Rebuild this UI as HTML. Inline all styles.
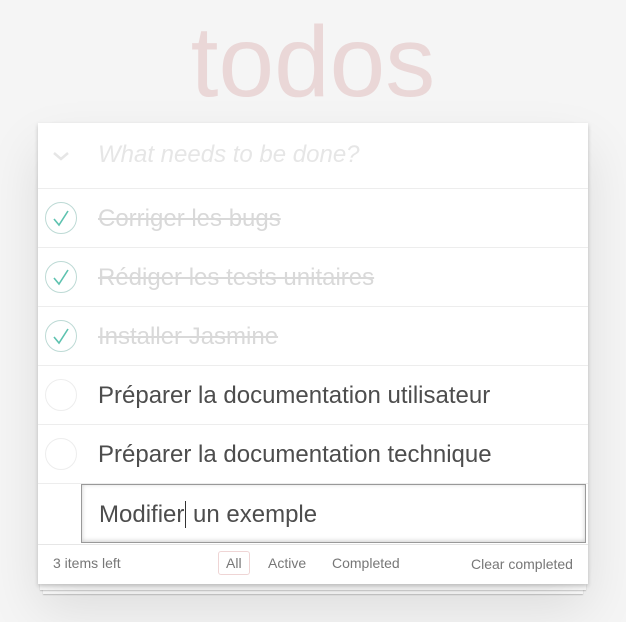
<html><head><style>
body{margin:0;background:#f5f5f5;width:626px;height:622px;overflow:hidden;font-family:"Liberation Sans",sans-serif;position:relative}
h1{position:absolute;top:7px;left:0;width:626px;margin:0;text-align:center;font-size:100px;font-weight:100;color:rgba(175,47,47,0.15);line-height:110px}
.app{position:absolute;left:38px;top:123px;width:550px;height:461px;background:#fff;box-shadow:0 2px 4px rgba(0,0,0,.2),0 25px 50px rgba(0,0,0,.1)}
.st{position:absolute;background:#fff;box-shadow:0 1px 1px rgba(0,0,0,.2)}
.row{position:absolute;left:0;width:550px;height:58px;border-top:1px solid #ededed;font-size:24px;color:#4d4d4d}
.row span{position:absolute;left:60px;top:16px;line-height:28px}
.done span{color:#d9d9d9;text-decoration:line-through}
.c{position:absolute;left:7px;top:13px;width:30px;height:30px;border:1px solid #ededed;border-radius:50%}
.done .c{border-color:#bddad5}
.ft{position:absolute;left:0;top:421px;width:550px;height:40px;border-top:1px solid #e6e6e6;font-size:14px;color:#777}
</style></head><body>
<h1>todos</h1>
<div class="st" style="left:43px;top:588px;width:540px;height:6px"></div>
<div class="st" style="left:40px;top:584px;width:546px;height:6px"></div>
<div class="app">
<svg style="position:absolute;left:14px;top:28px" width="18" height="12"><path d="M2 2 L9 8 L16 2" stroke="#e6e6e6" stroke-width="2.5" fill="none"/></svg>
<div style="position:absolute;left:60px;top:18px;font-size:24px;font-style:italic;color:#e6e6e6">What needs to be done?</div>
<div class="row done" style="top:65px"><div class="c"><svg width="30" height="30"><path d="M8 16 L13 22 L22 8" stroke="#5dc2af" stroke-width="1.6" fill="none"/></svg></div><span>Corriger les bugs</span></div>
<div class="row done" style="top:124px"><div class="c"><svg width="30" height="30"><path d="M8 16 L13 22 L22 8" stroke="#5dc2af" stroke-width="1.6" fill="none"/></svg></div><span>Rédiger les tests unitaires</span></div>
<div class="row done" style="top:183px"><div class="c"><svg width="30" height="30"><path d="M8 16 L13 22 L22 8" stroke="#5dc2af" stroke-width="1.6" fill="none"/></svg></div><span>Installer Jasmine</span></div>
<div class="row" style="top:242px"><div class="c"></div><span>Préparer la documentation utilisateur</span></div>
<div class="row" style="top:301px"><div class="c"></div><span>Préparer la documentation technique</span></div>
<div class="row" style="top:360px"></div>
<div style="position:absolute;left:43px;top:361px;width:503px;height:57px;border:1px solid #999;box-shadow:inset 0 -1px 5px rgba(0,0,0,.2);background:#fff;font-size:24px;color:#4d4d4d"><span style="position:absolute;left:17px;top:16px;line-height:28px">Modifier<span style="border-left:1px solid #333;margin-left:1px"></span> un exemple</span></div>
<div class="ft">
<span style="position:absolute;left:15px;top:10px">3 items left</span>
<span style="position:absolute;left:180px;top:6px;border:1px solid rgba(175,47,47,.2);border-radius:3px;padding:3px 7px">All</span>
<span style="position:absolute;left:230px;top:10px">Active</span>
<span style="position:absolute;left:294px;top:10px">Completed</span>
<span style="position:absolute;left:433px;top:11px">Clear completed</span>
</div>
</div>
</body></html>
